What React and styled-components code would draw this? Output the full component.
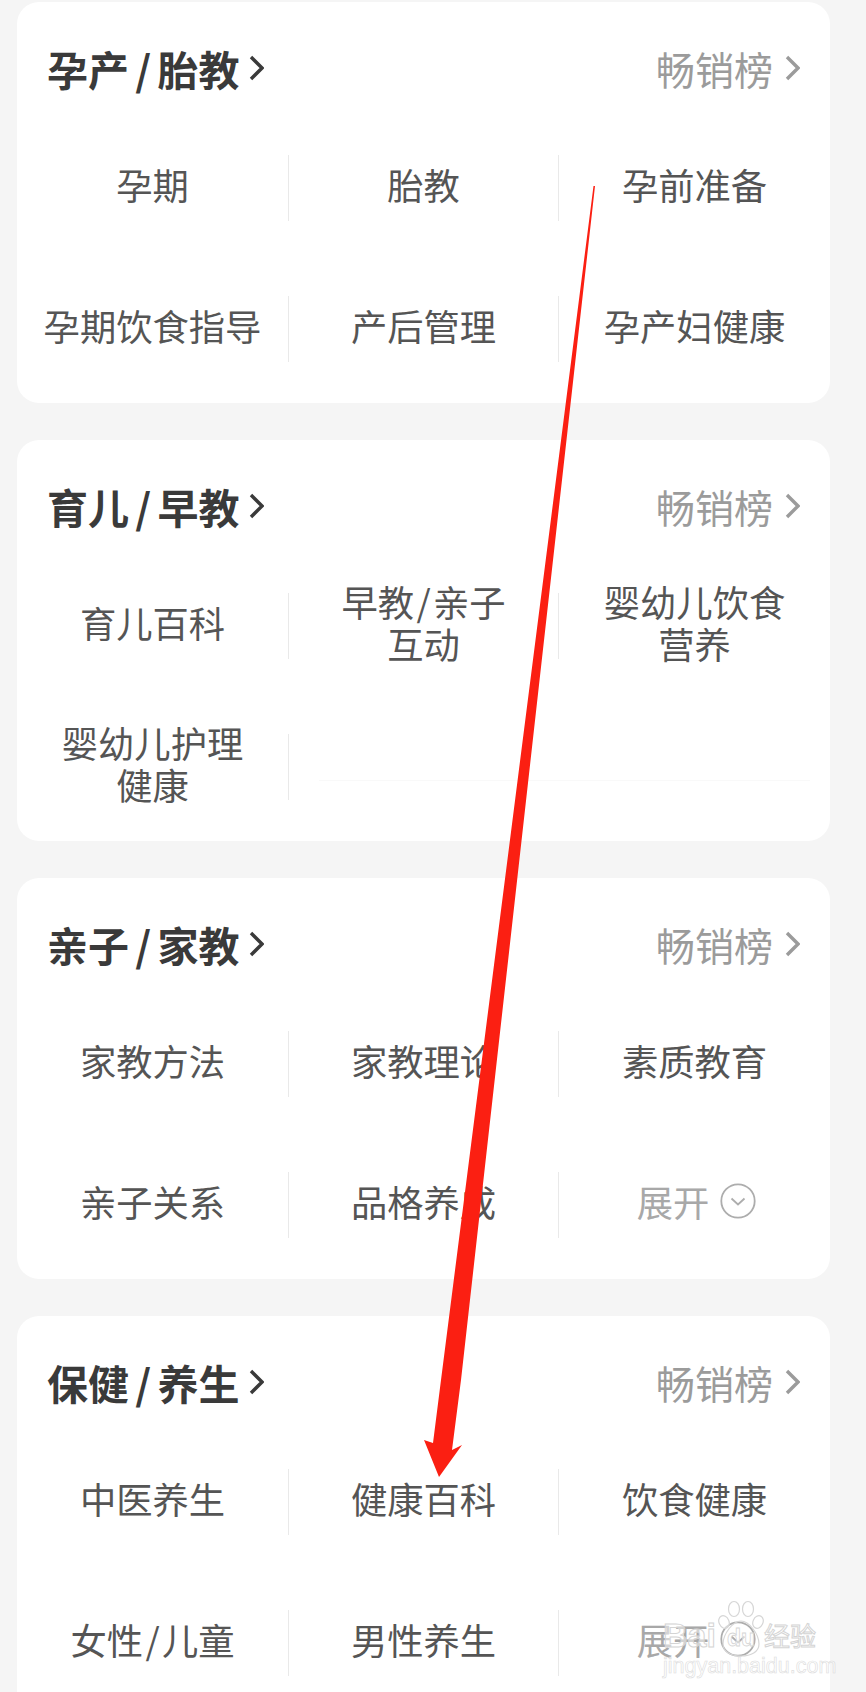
import React from 'react'
import styled, { createGlobalStyle } from 'styled-components'

const Global = createGlobalStyle`
  html, body {
    margin: 0;
    padding: 0;
    background: #f5f5f5;
  }
  body {
    font-family: "Noto Sans CJK SC", "Noto Sans", sans-serif;
  }
`

const Page = styled.div`
  position: relative;
  width: 866px;
  height: 1692px;
  overflow: hidden;
  box-sizing: border-box;
  padding: 2px 36px 0 17px;
  display: flex;
  flex-direction: column;
  gap: 37px;
`

const Card = styled.section`
  flex: none;
  height: 401px;
  box-sizing: border-box;
  background: #fff;
  border-radius: 22px;
  padding-top: 38px;
`

const Header = styled.div`
  height: 56px;
  padding: 0 30px 0 30px;
  display: flex;
  align-items: center;
  justify-content: space-between;
`

const Title = styled.h2`
  margin: 0;
  display: flex;
  align-items: center;
  gap: 10px;
  font-size: 41px;
  line-height: 56px;
  font-weight: 700;
  color: #3a3a3a;
  word-spacing: -3px;
`

const Rank = styled.div`
  display: flex;
  align-items: center;
  gap: 12px;
  font-size: 39px;
  line-height: 56px;
  color: #9b9b9b;
`

const Grid = styled.div`
  margin-top: 59px;
  display: grid;
  grid-template-columns: 272px 270px 271px;
  grid-auto-rows: 66px;
  row-gap: 75px;
`

const Cell = styled.div`
  display: flex;
  align-items: center;
  justify-content: center;
  gap: 11px;
  box-sizing: border-box;
  padding-bottom: 9px;
  padding-left: ${p => (p.$muted ? '4px' : '0')};
  text-align: center;
  white-space: pre-line;
  font-size: 36.3px;
  line-height: 42px;
  color: ${p => (p.$muted ? '#a8a8a8' : '#555')};
  border-right: ${p => (p.$last ? 'none' : '1px solid #e9e9e9')};
`

const Blank = styled.div`
  grid-column: span 2;
  align-self: center;
  height: 1px;
  margin: 27px 20px 0 30px;
  background: #f9f9f9;
`

const ArrowLayer = styled.svg`
  position: absolute;
  left: 0;
  top: 0;
  width: 866px;
  height: 1692px;
  pointer-events: none;
`

const Watermark = styled.div`
  position: absolute;
  left: 663px;
  top: 1600px;
  width: 156px;
  height: 74px;
  color: rgba(255, 255, 255, 0.5);
`

const WatermarkRow = styled.div`
  height: 58px;
  display: flex;
  align-items: center;
`

const WatermarkWord = styled.span`
  font-family: "Liberation Sans", sans-serif;
  font-size: 34px;
  line-height: 40px;
  font-weight: 700;
  width: 55px;
  margin-top: 12px;
  -webkit-text-stroke: 1px #d4d4d4;
`

const WatermarkCn = styled.span`
  font-size: 26px;
  line-height: 30px;
  margin-top: 12px;
  -webkit-text-stroke: 1px #d4d4d4;
`

const WatermarkUrl = styled.div`
  font-family: "Liberation Sans", sans-serif;
  font-size: 21.5px;
  line-height: 16px;
  white-space: nowrap;
  -webkit-text-stroke: 0.6px #dcdcdc;
`

const Chevron = ({ color }) => (
  <svg width="15" height="26" viewBox="0 0 15 26" fill="none">
    <path d="M2 2 L13 13 L2 24" stroke={color} strokeWidth="3.4" strokeLinejoin="miter" />
  </svg>
)

const CircleDown = () => (
  <svg width="36" height="36" viewBox="0 0 36 36" fill="none">
    <circle cx="18" cy="18" r="16.7" stroke="#adadad" strokeWidth="1.8" />
    <path d="M11.5 15.5 L18 21.5 L24.5 15.5" stroke="#adadad" strokeWidth="1.8" />
  </svg>
)

const Paw = () => (
  <svg width="46" height="58" viewBox="0 0 46 58" fill="rgba(255,255,255,0.5)" stroke="#d6d6d6" strokeWidth="1.2">
    <ellipse cx="6" cy="22" rx="5" ry="6.5" transform="rotate(-25 6 22)" />
    <ellipse cx="16" cy="9" rx="5.5" ry="7.5" />
    <ellipse cx="30" cy="9" rx="5.5" ry="7.5" />
    <ellipse cx="40" cy="22" rx="5" ry="6.5" transform="rotate(25 40 22)" />
    <path d="M23 21 C31 21 41 34 41 44 C41 52 33 56 23 56 C13 56 5 52 5 44 C5 34 15 21 23 21 Z" fill="none" />
    <text x="23" y="46" textAnchor="middle" fontFamily="Liberation Sans, sans-serif" fontSize="23" fontWeight="700" strokeWidth="0.8">du</text>
  </svg>
)

const EXPAND = '__expand__'

const sections = [
  { title: '孕产 / 胎教', items: ['孕期', '胎教', '孕前准备', '孕期饮食指导', '产后管理', '孕产妇健康'] },
  { title: '育儿 / 早教', items: ['育儿百科', '早教\u200A/\u200A亲子\n互动', '婴幼儿饮食\n营养', '婴幼儿护理\n健康'] },
  { title: '亲子 / 家教', items: ['家教方法', '家教理论', '素质教育', '亲子关系', '品格养成', EXPAND] },
  { title: '保健 / 养生', items: ['中医养生', '健康百科', '饮食健康', '女性\u200A/\u200A儿童', '男性养生', EXPAND] },
]

const Section = ({ title, items }) => (
  <Card>
    <Header>
      <Title>{title}<Chevron color="#3a3a3a" /></Title>
      <Rank>畅销榜<Chevron color="#9b9b9b" /></Rank>
    </Header>
    <Grid>
      {items.map((item, i) => (
        item === EXPAND
          ? <Cell key={i} $muted $last>展开<CircleDown /></Cell>
          : <Cell key={i} $last={i % 3 === 2}>{item}</Cell>
      ))}
      {items.length === 4 && <Blank />}
    </Grid>
  </Card>
)

export default function App() {
  return (
    <Page>
      <Global />
      {sections.map(s => <Section key={s.title} {...s} />)}
      <Watermark>
        <WatermarkRow>
          <WatermarkWord>Bai</WatermarkWord>
          <Paw />
          <WatermarkCn>经验</WatermarkCn>
        </WatermarkRow>
        <WatermarkUrl>jingyan.baidu.com</WatermarkUrl>
      </Watermark>
      <ArrowLayer viewBox="0 0 866 1692">
        <path d="M593.5 186 L595 186 L461 1380 L452 1450 L462 1445 L439 1477 L424 1440 L433 1443 L441 1380 Z" fill="#fb1f12" />
      </ArrowLayer>
    </Page>
  )
}
